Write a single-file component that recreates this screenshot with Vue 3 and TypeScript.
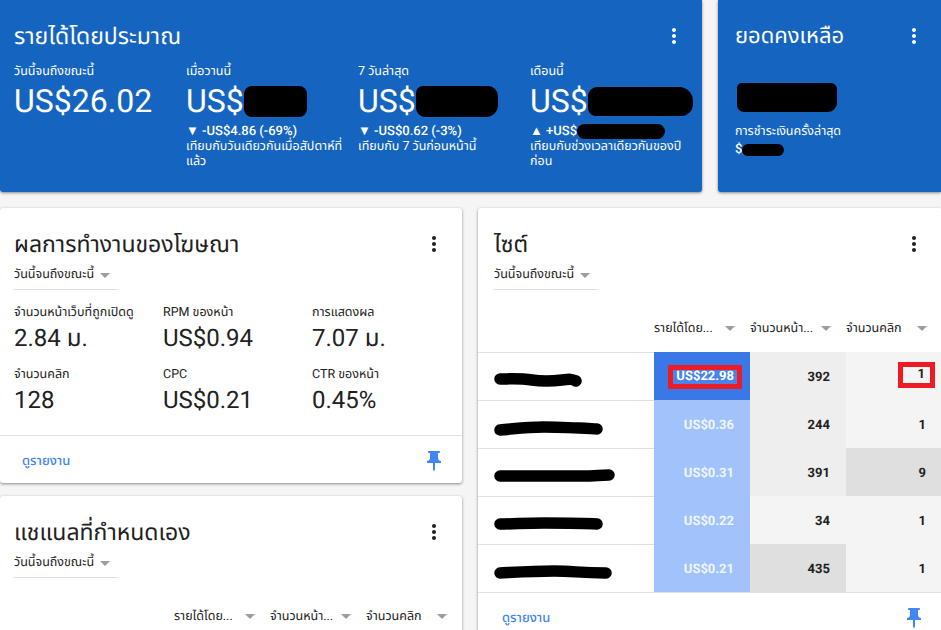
<script setup lang="ts">
interface Period { label: string; value: string; blob?: string; delta?: string; deltaBlob?: boolean; note?: string }
const periods: Period[] = [
  { label: 'วันนี้จนถึงขณะนี้', value: 'US$26.02' },
  { label: 'เมื่อวานนี้', value: 'US$', blob: 'b1', delta: '▼ -US$4.86 (-69%)', note: 'เทียบกับวันเดียวกันเมื่อสัปดาห์ที่แล้ว' },
  { label: '7 วันล่าสุด', value: 'US$', blob: 'b2', delta: '▼ -US$0.62 (-3%)', note: 'เทียบกับ 7 วันก่อนหน้านี้' },
  { label: 'เดือนนี้', value: 'US$', blob: 'b3', delta: '▲ +US$', deltaBlob: true, note: 'เทียบกับช่วงเวลาเดียวกันของปีก่อน' },
]
const metrics = [
  { label: 'จำนวนหน้าเว็บที่ถูกเปิดดู', value: '2.84 ม.' },
  { label: 'RPM ของหน้า', value: 'US$0.94' },
  { label: 'การแสดงผล', value: '7.07 ม.' },
  { label: 'จำนวนคลิก', value: '128' },
  { label: 'CPC', value: 'US$0.21' },
  { label: 'CTR ของหน้า', value: '0.45%' },
]
const rows = [
  { scribble: 'M6 10 C 15 10 25 9 38 11 S 60 12 68 11 S 78 10 82 12', rev: 'US$22.98', pv: '392', clicks: '1', revC: 'strong', pvC: 'mid', clC: 'light' },
  { scribble: 'M6 13 C 20 12 30 10 50 10 S 75 11 85 11 S 98 12 103 12', rev: 'US$0.36', pv: '244', clicks: '1', revC: 'soft', pvC: 'mid', clC: 'light' },
  { scribble: 'M6 11 C 30 11 60 11 84 11 S 100 10 115 10', rev: 'US$0.31', pv: '391', clicks: '9', revC: 'soft', pvC: 'mid', clC: 'dark' },
  { scribble: 'M6 11 C 20 11 30 10 50 10 S 90 10 103 11', rev: 'US$0.22', pv: '34', clicks: '1', revC: 'soft', pvC: 'light', clC: 'light' },
  { scribble: 'M6 12 C 25 11 40 10 60 10 S 85 12 112 12', rev: 'US$0.21', pv: '435', clicks: '1', revC: 'soft', pvC: 'dark', clC: 'light' },
]
const kebab = 'M12 8c1.1 0 2-.9 2-2s-.9-2-2-2-2 .9-2 2 .9 2 2 2zm0 2c-1.1 0-2 .9-2 2s.9 2 2 2 2-.9 2-2-.9-2-2-2zm0 6c-1.1 0-2 .9-2 2s.9 2 2 2 2-.9 2-2-.9-2-2-2z'
const pin = 'M16 9V4h1c.55 0 1-.45 1-1s-.45-1-1-1H7c-.55 0-1 .45-1 1s.45 1 1 1h1v5c0 1.66-1.34 3-3 3v2h5.97v7l1 1 1-1v-7H19v-2c-1.66 0-3-1.34-3-3z'
const heads = ['รายได้โดย...', 'จำนวนหน้า...', 'จำนวนคลิก']
</script>

<template>
  <div class="page">
    <section class="row-top">
      <article class="card blue earnings">
        <header class="head">
          <h2 class="title">รายได้โดยประมาณ</h2>
          <svg class="kebab" viewBox="0 0 24 24" width="24" height="24"><path :d="kebab" fill="#fff" /></svg>
        </header>
        <div class="periods">
          <div v-for="p in periods" :key="p.label" class="period">
            <div class="p-label">{{ p.label }}</div>
            <div class="p-value">{{ p.value }}<span v-if="p.blob" class="blob" :class="p.blob"></span></div>
            <div v-if="p.delta" class="p-delta">{{ p.delta }}<span v-if="p.deltaBlob" class="blob b4"></span></div>
            <div v-if="p.note" class="p-note">{{ p.note }}</div>
          </div>
        </div>
      </article>
      <article class="card blue balance">
        <header class="head">
          <h2 class="title small">ยอดคงเหลือ</h2>
          <svg class="kebab" viewBox="0 0 24 24" width="24" height="24"><path :d="kebab" fill="#fff" /></svg>
        </header>
        <div class="b-value"><span class="blob b5"></span></div>
        <div class="p-note">การชำระเงินครั้งล่าสุด</div>
        <div class="p-delta">$<span class="blob b6"></span></div>
      </article>
    </section>

    <section class="row-main">
      <div class="col-left">
        <article class="card perf">
          <header class="head">
            <h2 class="title ink">ผลการทำงานของโฆษณา</h2>
            <svg class="kebab" viewBox="0 0 24 24" width="24" height="24"><path :d="kebab" fill="#212121" /></svg>
          </header>
          <div class="picker"><span>วันนี้จนถึงขณะนี้</span><i class="caret"></i></div>
          <div class="metrics">
            <div v-for="m in metrics" :key="m.label" class="metric">
              <div class="m-label">{{ m.label }}</div>
              <div class="m-value">{{ m.value }}</div>
            </div>
          </div>
          <footer class="foot">
            <a class="link">ดูรายงาน</a>
            <svg viewBox="0 0 24 24" width="24" height="24"><path :d="pin" fill="#4285f4" /></svg>
          </footer>
        </article>
        <article class="card channels">
          <header class="head">
            <h2 class="title ink">แชแนลที่กำหนดเอง</h2>
            <svg class="kebab" viewBox="0 0 24 24" width="24" height="24"><path :d="kebab" fill="#212121" /></svg>
          </header>
          <div class="picker"><span>วันนี้จนถึงขณะนี้</span><i class="caret"></i></div>
          <div class="t-head">
            <div v-for="h in heads" :key="h" class="th"><span>{{ h }}</span><i class="caret"></i></div>
          </div>
        </article>
      </div>

      <article class="card sites">
        <header class="head">
          <h2 class="title ink">ไซต์</h2>
          <svg class="kebab" viewBox="0 0 24 24" width="24" height="24"><path :d="kebab" fill="#212121" /></svg>
        </header>
        <div class="picker"><span>วันนี้จนถึงขณะนี้</span><i class="caret"></i></div>
        <div class="t-head">
          <div v-for="h in heads" :key="h" class="th"><span>{{ h }}</span><i class="caret"></i></div>
        </div>
        <div v-for="(r, i) in rows" :key="i" class="tr">
          <div class="td-name">
            <svg viewBox="0 0 130 20" width="130" height="20"><path :d="r.scribble" fill="none" stroke="#000" stroke-width="11.5" stroke-linecap="round" /></svg>
          </div>
          <div class="td rev" :class="r.revC"><span :class="{ marked: i === 0 }">{{ r.rev }}</span></div>
          <div class="td" :class="r.pvC">{{ r.pv }}</div>
          <div class="td" :class="r.clC"><span :class="{ boxed: i === 0 }">{{ r.clicks }}</span></div>
        </div>
        <footer class="foot site-foot">
          <a class="link">ดูรายงาน</a>
          <svg viewBox="0 0 24 24" width="24" height="24"><path :d="pin" fill="#4285f4" /></svg>
        </footer>
      </article>
    </section>
  </div>
</template>

<style scoped>
.page {
  width: 941px;
  height: 630px;
  overflow: hidden;
  background: #f5f5f5;
  font-family: Roboto, "Noto Sans Thai", "Noto Sans", "Liberation Sans", sans-serif;
  color: #212121;
  text-rendering: geometricPrecision;
}
.row-top { display: flex; gap: 16px; height: 192px; }
.card {
  background: #fff;
  border-radius: 3px;
  box-shadow: 0 1px 3px rgba(0, 0, 0, 0.45);
  box-sizing: border-box;
}
.blue { background: #1565c0; color: #fff; padding: 0 14px; }
.earnings { width: 702px; flex: none; border-radius: 0 0 3px 3px; }
.balance { width: 223px; flex: none; padding: 0 13px 0 17px; border-radius: 0 0 0 3px; }
.head {
  display: flex;
  align-items: center;
  justify-content: space-between;
  height: 72px;
}
.kebab { margin-right: 2px; flex: none; }
.title { margin: 2px 0 0; font-size: 23px; font-weight: 400; line-height: 28px; white-space: nowrap; }
.small { font-size: 22px; }
.ink { color: #212121; }
.periods { display: flex; margin-top: -8px; }
.period { width: 172px; flex: none; padding-right: 14px; box-sizing: border-box; }
.p-label { font-size: 12.5px; line-height: 16px; white-space: nowrap; }
.p-value { font-size: 32px; line-height: 40px; margin-top: 1px; display: flex; align-items: center; white-space: nowrap; }
.p-delta { font-size: 13px; line-height: 15px; margin-top: 3px; font-weight: 500; display: flex; align-items: center; white-space: nowrap; }
.p-note { font-size: 12.5px; line-height: 15px; }
.blob { display: inline-block; background: #000; border-radius: 8px; flex: none; }
.b1 { width: 63px; height: 31px; }
.b2 { width: 82px; height: 31px; border-radius: 7px 10px 12px 9px; }
.b3 { width: 105px; height: 29px; border-radius: 9px 14px 12px 8px; }
.b4 { width: 88px; height: 15px; }
.b5 { display: block; width: 100px; height: 29px; margin-left: 2px; border-radius: 5px 6px 9px 7px; }
.b6 { width: 42px; height: 12px; }
.b-value { height: 36px; margin-top: 11px; margin-bottom: 5px; }

.row-main { display: flex; gap: 16px; margin-top: 16px; }
.col-left { width: 462px; flex: none; display: flex; flex-direction: column; gap: 13px; }
.perf { height: 275px; position: relative; }
.perf .head, .channels .head { padding: 0 14px; }
.sites { width: 464px; flex: none; height: 430px; }
.sites .head { padding: 0 14px 0 16px; }
.picker {
  display: flex;
  align-items: center;
  gap: 6px;
  width: 104px;
  height: 18px;
  margin: -16px 0 0 14px;
  padding: 2px 0 5px;
  border-bottom: 1px solid #e0e0e0;
  font-size: 12.5px;
  line-height: 16px;
  white-space: nowrap;
}
.sites .picker { margin-left: 16px; }
.caret {
  display: inline-block;
  width: 0;
  height: 0;
  border-left: 5px solid transparent;
  border-right: 5px solid transparent;
  border-top: 5px solid #9e9e9e;
  flex: none;
}
.metrics {
  display: grid;
  grid-template-columns: repeat(3, 149px);
  padding: 14px 0 0 14px;
  row-gap: 12px;
}
.m-label { font-size: 12.5px; line-height: 18px; white-space: nowrap; }
.m-value { font-size: 24px; line-height: 32px; }
.foot {
  position: absolute;
  left: 0;
  right: 0;
  bottom: 0;
  height: 48px;
  box-sizing: border-box;
  border-top: 1px solid #e0e0e0;
  display: flex;
  align-items: center;
  justify-content: space-between;
  padding: 3px 16px 0 22px;
}
.link { color: #4285f4; font-size: 13px; font-weight: 500; }
.site-foot { position: static; padding: 0 16px 0 24px; height: 50px; }
.t-head {
  display: grid;
  grid-template-columns: 96px 96px 96px;
  justify-content: end;
  height: 62px;
  padding-top: 31px;
  box-sizing: border-box;
}
.th {
  display: flex;
  align-items: flex-start;
  justify-content: space-between;
  padding-right: 15px;
  font-size: 12.5px;
  font-weight: 400;
  line-height: 16px;
}
.th .caret { margin-top: 5px; }
.tr {
  display: grid;
  grid-template-columns: 176px 96px 96px 96px;
  height: 48px;
  box-shadow: inset 0 1px 0 #e0e0e0;
}
.td-name { display: flex; align-items: center; padding: 6px 0 0 16px; }
.td {
  display: flex;
  align-items: center;
  justify-content: flex-end;
  padding: 2px 16px 0 0;
  font-size: 13px;
  font-weight: 700;
}
.rev { color: rgba(255, 255, 255, 0.85); }
.strong { background: #3b78e7; color: #fff; }
.soft { background: #a1c2fa; }
.mid { background: #eeeeee; }
.light { background: #f4f4f4; }
.dark { background: #dfdfdf; }
.marked {
  background: #4a84ea;
  outline: 5px solid #ed1c24;
  line-height: 14px;
  padding: 0 3px;
  margin: 0 -3px 0 0;
}
.boxed {
  outline: 5px solid #ed1c24;
  line-height: 16px;
  padding: 0 5px 0 15px;
  margin: -4px -4px 0 0;
}
</style>

<style>
html, body { margin: 0; background: #f5f5f5; }
</style>
